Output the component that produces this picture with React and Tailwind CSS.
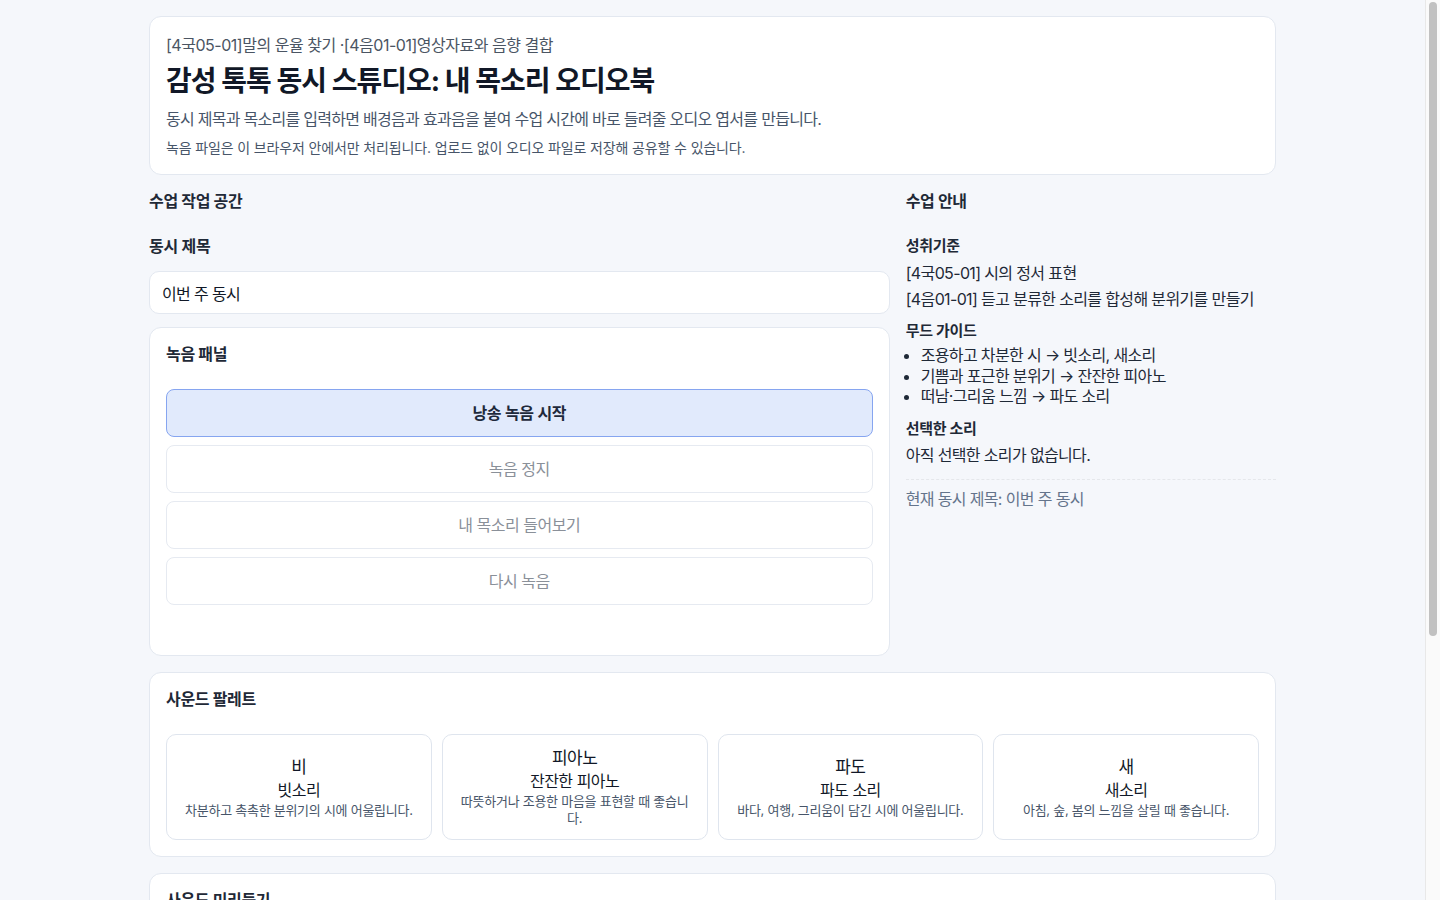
import React, { useState } from "react";

const FONT = { fontFamily: '"Inter", "Noto Sans CJK KR", "Noto Sans", sans-serif' };

const SOUNDS = [
  { key: "rain", icon: "비", name: "빗소리", desc: "차분하고 촉촉한 분위기의 시에 어울립니다." },
  { key: "piano", icon: "피아노", name: "잔잔한 피아노", desc: "따뜻하거나 조용한 마음을 표현할 때 좋습니다." },
  { key: "wave", icon: "파도", name: "파도 소리", desc: "바다, 여행, 그리움이 담긴 시에 어울립니다." },
  { key: "bird", icon: "새", name: "새소리", desc: "아침, 숲, 봄의 느낌을 살릴 때 좋습니다." },
];

function RecordButton({ active, children }) {
  return (
    <button
      type="button"
      className={
        active
          ? "h-12 w-full rounded-lg border border-[#86a5f0] bg-[#e1eafc] text-base font-semibold tracking-[-0.02em] text-[#1e293b]"
          : "h-12 w-full rounded-lg border border-[#e6eaf1] bg-white text-base tracking-[-0.03em] text-[#8a9099]"
      }
    >
      {children}
    </button>
  );
}

export default function App() {
  const [title, setTitle] = useState("이번 주 동시");

  return (
    <div style={FONT} className="flex min-h-screen bg-[#f5f7fb] text-[#1f2937]">
      <main className="min-w-0 flex-1">
        <div className="mx-auto w-[1127px] pt-4 pb-4">
          {/* Header */}
          <header className="rounded-xl border border-[#e3e8f0] bg-white px-4 pt-4 pb-4">
            <p className="text-base leading-6 tracking-[-0.03em] text-[#4b5563]">
              [4국05-01]말의 운율 찾기 ·[4음01-01]영상자료와 음향 결합
            </p>
            <h1 className="mt-1.5 text-[28px] font-bold leading-9 tracking-[-0.035em] text-[#111827]">
              감성 톡톡 동시 스튜디오: 내 목소리 오디오북
            </h1>
            <p className="mt-2 text-base leading-6 tracking-[-0.045em] text-[#475569]">
              동시 제목과 목소리를 입력하면 배경음과 효과음을 붙여 수업 시간에 바로 들려줄 오디오 엽서를 만듭니다.
            </p>
            <p className="mt-[7px] text-sm leading-5 tracking-[-0.01em] text-[#475569]">
              녹음 파일은 이 브라우저 안에서만 처리됩니다. 업로드 없이 오디오 파일로 저장해 공유할 수 있습니다.
            </p>
          </header>

          <div className="mt-4 grid grid-cols-[2fr_1fr] gap-4">
            {/* Workspace */}
            <section>
              <h2 className="text-base font-bold leading-5 tracking-[-0.02em] text-[#1f2937]">수업 작업 공간</h2>
              <label className="mt-[23px] block text-base font-semibold leading-6 tracking-[-0.02em] text-[#1f2937]">
                동시 제목
              </label>
              <input
                value={title}
                onChange={(e) => setTitle(e.target.value)}
                className="mt-[13px] block h-[43px] w-full rounded-[10px] border border-[#e3e8f0] bg-white px-3 text-base tracking-[-0.04em] text-[#111827] outline-none"
              />
              <div className="mt-[13px] rounded-xl border border-[#e3e8f0] bg-white p-4">
                <h3 className="text-base font-bold leading-5 tracking-[-0.02em] text-[#1f2937]">녹음 패널</h3>
                <div className="mt-[25px] flex flex-col gap-2">
                  <RecordButton active>낭송 녹음 시작</RecordButton>
                  <RecordButton>녹음 정지</RecordButton>
                  <RecordButton>내 목소리 들어보기</RecordButton>
                  <RecordButton>다시 녹음</RecordButton>
                </div>
                <div className="h-[34px]" />
              </div>
            </section>

            {/* Guide */}
            <aside className="tracking-[-0.04em]">
              <h2 className="text-base font-bold leading-5 tracking-[-0.02em] text-[#1f2937]">수업 안내</h2>
              <h4 className="mt-[23px] text-[15px] font-bold leading-6 tracking-[-0.02em] text-[#1f2937]">성취기준</h4>
              <p className="mt-0.5 text-base leading-[26px]">[4국05-01] 시의 정서 표현</p>
              <p className="text-base leading-[26px]">[4음01-01] 듣고 분류한 소리를 합성해 분위기를 만들기</p>
              <h4 className="mt-[7px] text-[15px] font-bold leading-6 tracking-[-0.02em] text-[#1f2937]">무드 가이드</h4>
              <ul className="mt-0.5 list-disc pl-[15px] text-base leading-[20.5px]">
                <li>조용하고 차분한 시 → 빗소리, 새소리</li>
                <li>기쁨과 포근한 분위기 → 잔잔한 피아노</li>
                <li>떠남·그리움 느낌 → 파도 소리</li>
              </ul>
              <h4 className="mt-[10px] text-[15px] font-bold leading-6 tracking-[-0.02em] text-[#1f2937]">선택한 소리</h4>
              <p className="mt-0.5 text-base leading-6">아직 선택한 소리가 없습니다.</p>
              <div className="mt-3 border-t border-dashed border-[#e5e7eb]" />
              <p className="mt-[7px] text-base leading-6 text-[#64748b]">현재 동시 제목: {title}</p>
            </aside>
          </div>

          {/* Sound palette */}
          <section className="mt-4 rounded-xl border border-[#e3e8f0] bg-white p-4">
            <h3 className="text-base font-bold leading-5 tracking-[-0.02em] text-[#1f2937]">사운드 팔레트</h3>
            <div className="mt-[25px] grid grid-cols-4 gap-2.5">
              {SOUNDS.map((s) => (
                <button
                  key={s.key}
                  type="button"
                  className="flex h-[106px] flex-col items-center justify-center rounded-[10px] border border-[#dfe5ee] bg-white px-[14px] text-center"
                >
                  <span className="text-[17px] leading-[23px] tracking-[-0.03em] text-[#111827]">{s.icon}</span>
                  <span className="text-base leading-[23px] tracking-[-0.03em] text-[#111827]">{s.name}</span>
                  <span className="text-[13px] leading-[17px] tracking-[-0.02em] text-[#475569]">{s.desc}</span>
                </button>
              ))}
            </div>
          </section>

          {/* Mix preview */}
          <section className="mt-4 rounded-xl border border-[#e3e8f0] bg-white p-4">
            <h3 className="text-base font-bold leading-5 tracking-[-0.02em] text-[#1f2937]">사운드 미리듣기</h3>
            <p className="mt-4 text-sm leading-5 text-[#475569]">선택한 배경음과 목소리를 함께 들어 보고 음량을 조절하세요.</p>
            <div className="mt-4 grid grid-cols-2 gap-4">
              {["목소리 음량", "배경음 음량"].map((label, i) => (
                <div key={label} className="rounded-[10px] border border-[#e6eaf1] p-4">
                  <div className="flex items-center justify-between text-sm text-[#1f2937]">
                    <span>{label}</span>
                    <span className="text-[#64748b]">{i === 0 ? "100%" : "40%"}</span>
                  </div>
                  <div className="mt-3 h-2 rounded-full bg-[#e5e9f2]">
                    <div className="h-2 rounded-full bg-[#86a5f0]" style={{ width: i === 0 ? "100%" : "40%" }} />
                  </div>
                </div>
              ))}
            </div>
            <div className="mt-4 flex flex-col gap-2">
              <RecordButton>함께 들어보기</RecordButton>
              <RecordButton>오디오 엽서 저장하기</RecordButton>
            </div>
            <div className="h-6" />
          </section>
        </div>
      </main>

      {/* Window scrollbar strip */}
      <div className="sticky top-0 h-screen w-[15px] shrink-0 self-start border-l border-[#e8e8e8] bg-[#fafafa]">
        <div className="mt-[2px] ml-[3px] h-[634px] w-[8px] rounded-full bg-[#c1c1c1]" />
      </div>
    </div>
  );
}
